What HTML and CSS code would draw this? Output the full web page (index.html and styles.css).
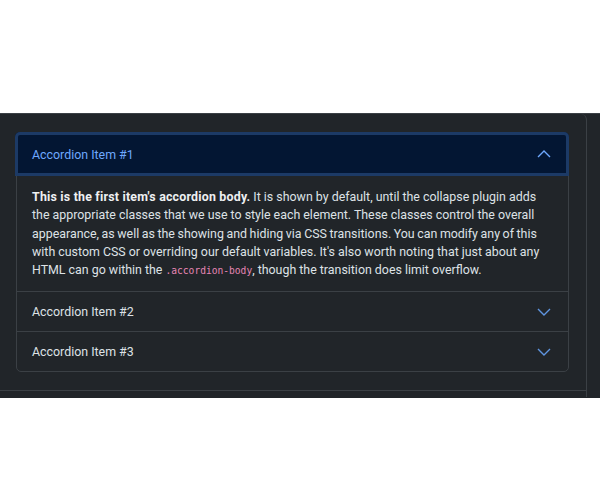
FILE: index.html
```html
<!DOCTYPE html>
<html lang="en">
<head>
<meta charset="utf-8">
<title>Accordion</title>
<link rel="stylesheet" href="styles.css">
</head>
<body>
<div class="panel">
  <div class="example">
    <div class="accordion">
      <div class="item">
        <div class="header active">
          <span class="title">Accordion Item #1</span>
          <svg class="chev" viewBox="0 0 14 8" width="14" height="8"><polyline points="1,7 7,1 13,7" fill="none" stroke="#6ea8fe" stroke-width="1.4"/></svg>
        </div>
        <div class="body"><strong>This is the first item's accordion body.</strong> It is shown by default, until the collapse plugin adds<br>the appropriate classes that we use to style each element. These classes control the overall<br><span class="tight">appearance, as well as the showing and hiding via CSS transitions. You can modify any of this</span><br>with custom CSS or overriding our default variables. It's also worth noting that just about any<br>HTML can go within the <code>.accordion-body</code>, though the transition does limit overflow.</div>
      </div>
      <div class="item">
        <div class="header">
          <span class="title">Accordion Item #2</span>
          <svg class="chev" viewBox="0 0 14 8" width="14" height="8"><polyline points="1,1 7,7 13,1" fill="none" stroke="#5f95e0" stroke-width="1.4"/></svg>
        </div>
      </div>
      <div class="item">
        <div class="header">
          <span class="title">Accordion Item #3</span>
          <svg class="chev" viewBox="0 0 14 8" width="14" height="8"><polyline points="1,1 7,7 13,1" fill="none" stroke="#5f95e0" stroke-width="1.4"/></svg>
        </div>
      </div>
    </div>
  </div>
  <div class="below"></div>
</div>
</body>
</html>
```
FILE: styles.css
```css
html, body {
  margin: 0;
  padding: 0;
  background: #ffffff;
}
body {
  font-family: Roboto, "Noto Sans", sans-serif;
  color: #dee2e6;
}
.panel {
  margin-top: 113px;
  height: 285px;
  box-sizing: border-box;
  background: #212529;
  border-top: 1px solid #3b4045;
}
.example {
  width: 587px;
  box-sizing: border-box;
  border-right: 1px solid #3b4045;
  border-bottom: 1px solid #3b4045;
  border-top-right-radius: 6px;
  padding: 18px 17px 18px 16px;
}
.below {
  width: 587px;
  height: 6px;
  box-sizing: border-box;
  border-right: 1px solid #3b4045;
}
.accordion {
  border: 1px solid #3b4045;
  border-radius: 5px;
}
.item + .item {
  border-top: 1px solid #3b4045;
}
.header {
  height: 39px;
  display: flex;
  align-items: center;
  justify-content: space-between;
  padding: 0 17px 0 15px;
  font-size: 12.4px;
}
.header.active {
  height: 44px;
  margin: -1px -1px 0 -2px;
  padding: 0 18px 0 17px;
  background: #031633;
  color: #6ea8fe;
  box-shadow: inset 0 0 0 3px #1c3a66;
  border-radius: 5px 5px 0 0;
  position: relative;
}
.chev {
  display: block;
  flex: none;
}
.body {
  padding: 12px 10px 11px 15px;
  font-size: 12.4px;
  line-height: 18.3px;
  white-space: nowrap;
}
.body strong {
  font-weight: 700;
  letter-spacing: 0.2px;
  color: #eef0f2;
}
.body .tight {
  word-spacing: -0.5px;
}
.body code {
  font-family: "DejaVu Sans Mono", "Liberation Mono", monospace;
  font-size: 9.6px;
  color: #e685b5;
}
```
